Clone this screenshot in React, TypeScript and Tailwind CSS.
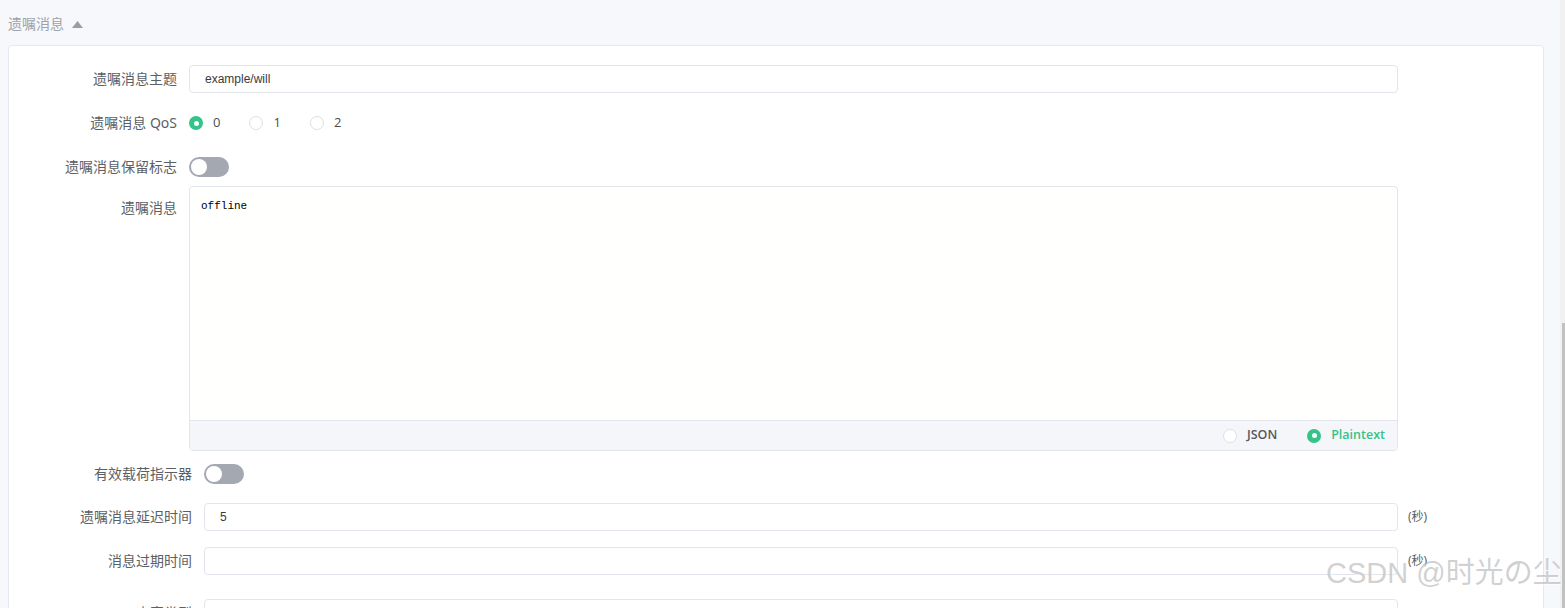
const cjk = "font-['Noto_Sans','Noto_Sans_CJK_SC',sans-serif]"

function Radio({ checked }: { checked?: boolean }) {
  return checked ? (
    <span className="flex h-[14px] w-[14px] items-center justify-center rounded-full bg-[#34c388]">
      <span className="h-[5px] w-[5px] rounded-full bg-white" />
    </span>
  ) : (
    <span className="h-[14px] w-[14px] rounded-full border border-[#dcdfe6] bg-white" />
  )
}

function Toggle() {
  return (
    <span className="flex h-[20px] w-[40px] items-center rounded-full bg-[#a3a8b1] pl-[2px]">
      <span className="h-[16px] w-[16px] rounded-full bg-white" />
    </span>
  )
}

function Label({ text, wide, top }: { text: string; wide?: boolean; top?: boolean }) {
  return (
    <div
      className={`${wide ? 'w-[183px]' : 'w-[168px]'} mr-[12px] shrink-0 text-right text-[14px] leading-[20px] text-[#5c5f66] ${top ? 'pt-[12px]' : ''}`}
    >
      {text}
    </div>
  )
}

function Input({ value, wide }: { value?: string; wide?: boolean }) {
  return (
    <div
      className={`${wide ? 'w-[1194px]' : 'w-[1209px]'} flex h-[28px] items-center rounded-[4px] border border-[#e3e5ed] bg-white pl-[15px] font-['Liberation_Sans',sans-serif] text-[12px] text-[#3a3a3a]`}
    >
      {value}
    </div>
  )
}

export default function App() {
  return (
    <div className={`relative flex h-[608px] w-[1565px] overflow-hidden bg-[#f7f8fc] ${cjk}`}>
      <div className="w-[1560px] pl-[8px] pr-[16px]">
        <div className="flex h-[45px] items-start pt-[14px]">
          <span className="text-[14px] leading-[20px] text-[#9fa2aa]">遗嘱消息</span>
          <svg width="11" height="7" viewBox="0 0 11 7" className="ml-[8px] mt-[7px]">
            <path d="M5.5 0 L11 7 L0 7 Z" fill="#9a9da5" />
          </svg>
        </div>

        <div className="h-[700px] rounded-[4px] border border-[#e6e8f0] bg-white pt-[19px]">
          <div className="flex h-[28px] items-center">
            <Label text="遗嘱消息主题" />
            <Input value="example/will" />
          </div>

          <div className="mt-[16px] flex h-[28px] items-center">
            <Label text="遗嘱消息 QoS" />
            {['0', '1', '2'].map((v, i) => (
              <div key={v} className="mr-[29px] flex items-center">
                <Radio checked={i === 0} />
                <span className="ml-[10px] font-['Open_Sans',sans-serif] text-[13px] text-[#4a4d55]">{v}</span>
              </div>
            ))}
          </div>

          <div className="mt-[20px] flex h-[20px] items-center">
            <Label text="遗嘱消息保留标志" />
            <Toggle />
          </div>

          <div className="mt-[9px] flex">
            <Label text="遗嘱消息" top />
            <div className="flex h-[265px] w-[1209px] flex-col overflow-hidden rounded-[4px] border border-[#e3e5ed] bg-[#fffffd]">
              <div className="flex-1 px-[11px] pt-[12px] font-['Liberation_Mono',monospace] text-[11px] leading-[14px] text-black">
                offline
              </div>
              <div className="flex h-[30px] items-center justify-end border-t border-[#e3e5ed] bg-[#f5f6fa] pr-[12px] font-['Open_Sans',sans-serif] text-[12.5px] font-semibold">
                <Radio />
                <span className="ml-[10px] mr-[30px] text-[#555860]">JSON</span>
                <Radio checked />
                <span className="ml-[10px] text-[#34c388]">Plaintext</span>
              </div>
            </div>
          </div>

          <div className="mt-[13px] flex h-[20px] items-center">
            <Label text="有效载荷指示器" wide />
            <Toggle />
          </div>

          <div className="mt-[19px] flex h-[28px] items-center">
            <Label text="遗嘱消息延迟时间" wide />
            <Input value="5" wide />
            <span className="ml-[10px] text-[12px] text-[#5c5f66]">(秒)</span>
          </div>

          <div className="mt-[16px] flex h-[28px] items-center">
            <Label text="消息过期时间" wide />
            <Input wide />
            <span className="ml-[10px] text-[12px] text-[#5c5f66]">(秒)</span>
          </div>

          <div className="mt-[24px] flex h-[28px] items-center">
            <Label text="内容类型" wide />
            <Input wide />
          </div>
        </div>
      </div>

      <div className="flex w-[5px] flex-col bg-[#f1f1f1]">
        <div className="h-[323px]" />
        <div className="ml-[2px] flex-1 bg-[#c1c1c1]" />
      </div>

      <div className="absolute left-[1326px] top-[556px] font-['Liberation_Sans','Noto_Sans_CJK_SC',sans-serif] text-[29px] leading-[34px] text-[rgba(170,170,170,0.55)] [text-shadow:1px_1px_0_rgba(255,255,255,0.7)]">
        CSDN @时光の尘
      </div>
    </div>
  )
}
